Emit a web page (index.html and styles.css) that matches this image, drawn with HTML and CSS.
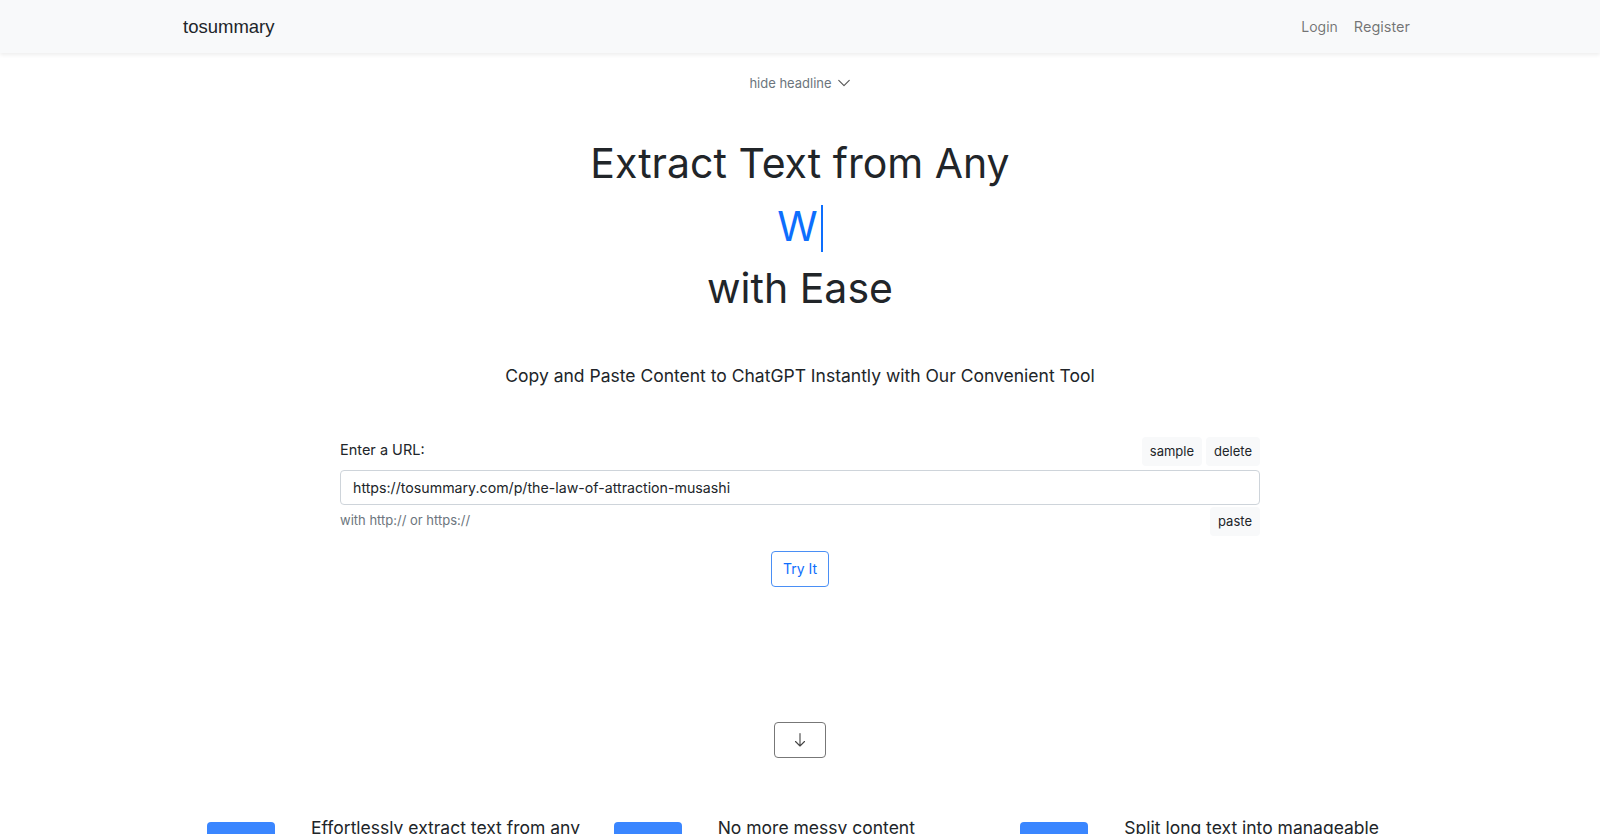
FILE: index.html
```html
<!DOCTYPE html>
<html lang="en">
<head>
<meta charset="utf-8">
<title>tosummary</title>
<link rel="stylesheet" href="styles.css">
</head>
<body>
<nav class="navbar">
  <div class="nav-inner">
    <a class="brand" href="#">tosummary</a>
    <div class="nav-links">
      <a class="nav-link" href="#">Login</a>
      <a class="nav-link" href="#">Register</a>
    </div>
  </div>
</nav>

<main class="main">
  <div class="toggle-row">
    <button class="toggle">hide headline
      <svg class="chev" width="14" height="14" viewBox="0 0 16 16"><path d="M2 5l6 6 6-6" fill="none" stroke="currentColor" stroke-width="1.3" stroke-linecap="round" stroke-linejoin="round"/></svg>
    </button>
  </div>

  <h1 class="headline">
    <span class="line">Extract Text from Any</span>
    <span class="line typed">W<span class="cursor"></span></span>
    <span class="line">with Ease</span>
  </h1>

  <p class="lead">Copy and Paste Content to ChatGPT Instantly with Our Convenient Tool</p>

  <form class="url-form">
    <div class="form-top">
      <label class="label" for="url">Enter a URL:</label>
      <div class="btn-group">
        <button type="button" class="btn-light">sample</button>
        <button type="button" class="btn-light">delete</button>
      </div>
    </div>
    <input id="url" class="input" type="text" value="https://tosummary.com/p/the-law-of-attraction-musashi">
    <div class="form-bottom">
      <span class="help">with http:// or https://</span>
      <button type="button" class="btn-light">paste</button>
    </div>
    <div class="submit-row">
      <button type="button" class="btn-outline">Try It</button>
    </div>
  </form>

  <div class="down-row">
    <button class="btn-down">
      <svg width="16" height="16" viewBox="0 0 16 16"><path d="M8 1.5v12.5M3.5 9.5L8 14l4.5-4.5" fill="none" stroke="currentColor" stroke-width="1.1" stroke-linecap="round" stroke-linejoin="round"/></svg>
    </button>
  </div>

  <section class="features">
    <div class="feature">
      <div class="feature-icon"></div>
      <p class="feature-text">Effortlessly extract text from any website</p>
    </div>
    <div class="feature">
      <div class="feature-icon"></div>
      <p class="feature-text">No more messy content formatting</p>
    </div>
    <div class="feature">
      <div class="feature-icon"></div>
      <p class="feature-text">Split long text into manageable chunks</p>
    </div>
  </section>
</main>
</body>
</html>
```

FILE: styles.css
```css
* { box-sizing: border-box; }
html, body { margin: 0; padding: 0; }
body {
  font-family: Inter, "Noto Sans", sans-serif;
  color: #212529;
  background: #fff;
  overflow: hidden;
}
a { text-decoration: none; }

.navbar {
  background: #f8f9fa;
  height: 53px;
  box-shadow: 0 2px 4px rgba(0, 0, 0, 0.07);
  position: relative;
  z-index: 1;
}
.nav-inner {
  width: 1234px;
  margin: 0 auto;
  height: 100%;
  display: flex;
  align-items: center;
  justify-content: space-between;
}
.brand {
  font-family: "Liberation Sans", Arial, sans-serif;
  font-size: 18.5px;
  color: #212529;
}
.nav-links { display: flex; }
.nav-link {
  font-size: 14.5px;
  color: rgba(0, 0, 0, 0.55);
  padding: 0 7px;
  margin-left: 2px;
}
.nav-link:first-child { font-size: 14px; }

.main { padding-top: 18px; }

.toggle-row { display: flex; justify-content: center; }
.toggle {
  border: 0;
  background: transparent;
  font-family: inherit;
  font-size: 13px;
  color: #6c757d;
  display: flex;
  align-items: center;
  gap: 5px;
  padding: 4px 8px;
  cursor: pointer;
}
.chev { color: #555; }

.headline {
  margin: 37px 0 0;
  text-align: center;
  font-weight: 400;
  font-size: 41px;
  line-height: 62.5px;
  color: #212529;
}
.headline .line { display: block; }
.typed { color: #0d6efd; }
.cursor {
  display: inline-block;
  width: 2px;
  height: 47px;
  background: #0d6efd;
  vertical-align: -11px;
  margin-left: 3px;
}

.lead {
  text-align: center;
  font-size: 17.5px;
  margin: 45px 0 0;
  color: #212529;
}

.url-form {
  width: 920px;
  margin: 51px auto 0;
}
.form-top {
  display: flex;
  justify-content: space-between;
  align-items: flex-end;
}
.label {
  font-size: 14.5px;
  padding-bottom: 12px;
}
.btn-group { display: flex; gap: 4px; }
.btn-light {
  background: #f8f9fa;
  border: 0;
  border-radius: 4px;
  font-family: inherit;
  font-size: 13px;
  color: #212529;
  height: 29px;
  padding: 0 8px;
}
.btn-group .btn-light { margin-bottom: 4px; }
.input {
  display: block;
  width: 100%;
  height: 35px;
  border: 1px solid #ced4da;
  border-radius: 4px;
  padding: 0 12px;
  font-family: inherit;
  font-size: 14.2px;
  color: #212529;
  outline: none;
}
.form-bottom {
  display: flex;
  justify-content: space-between;
  align-items: flex-start;
  margin-top: 2px;
}
.help {
  font-size: 13px;
  color: #6c757d;
  padding-top: 5px;
}
.submit-row {
  display: flex;
  justify-content: center;
  margin-top: 15px;
}
.btn-outline {
  background: #fff;
  border: 1px solid #4a8ff5;
  border-radius: 4px;
  color: #0d6efd;
  font-family: inherit;
  font-size: 14px;
  height: 36px;
  padding: 0 11px;
}

.down-row {
  display: flex;
  justify-content: center;
  margin-top: 135px;
}
.btn-down {
  width: 52px;
  height: 36px;
  background: #fff;
  border: 1px solid #777;
  border-radius: 4px;
  color: #444;
  display: flex;
  align-items: center;
  justify-content: center;
  padding: 0;
}

.features {
  width: 1220px;
  margin: 64px auto 0;
  display: grid;
  grid-template-columns: repeat(3, 1fr);
}
.feature {
  display: flex;
  gap: 36px;
  padding-left: 17px;
}
.feature-icon {
  flex: none;
  width: 68px;
  height: 60px;
  background: #3a86ff;
  border-radius: 4px;
}
.feature-text {
  margin: 0;
  font-size: 17.5px;
  line-height: 1.5;
  max-width: 280px;
  margin-top: -7px;
}
```
